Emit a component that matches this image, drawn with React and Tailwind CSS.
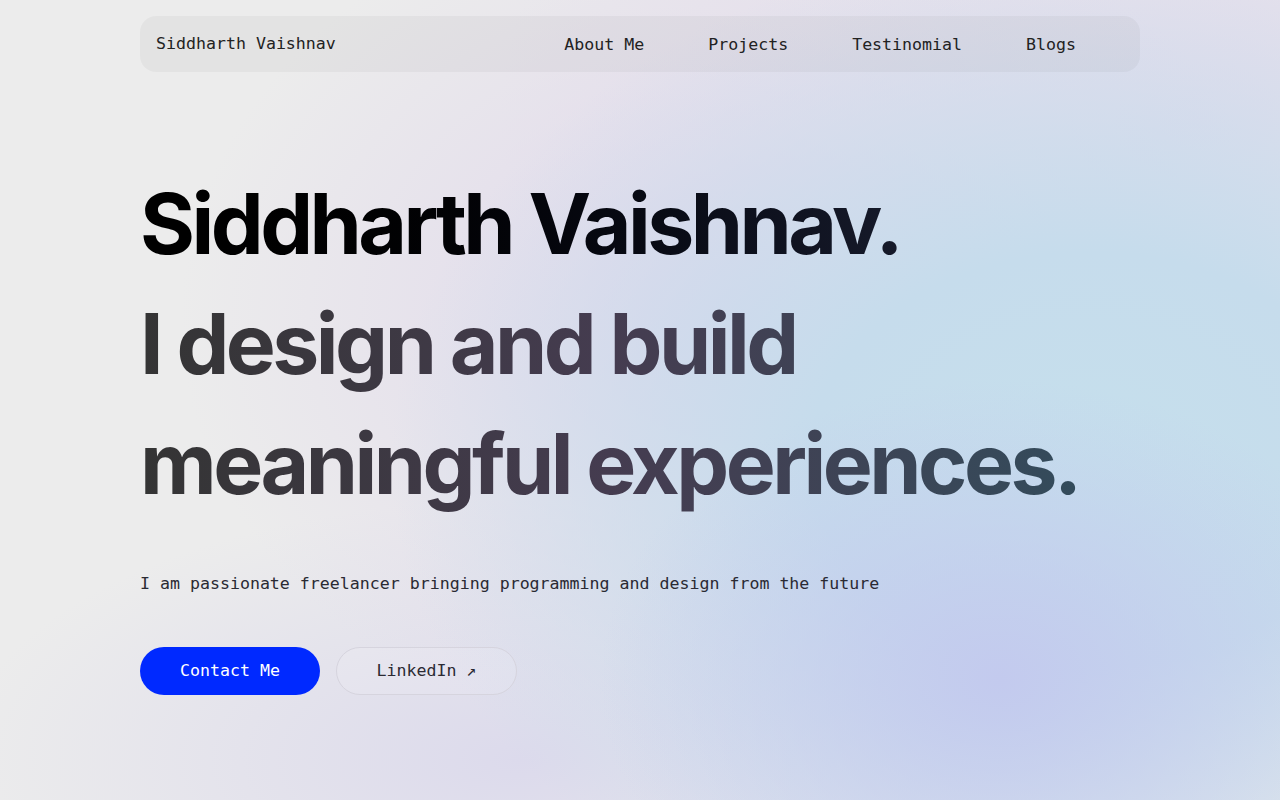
import React from "react";

const mono = { fontFamily: '"DejaVu Sans Mono", "Liberation Mono", monospace' };

export default function App() {
  return (
    <div className="min-h-[800px] w-full bg-[#ececec] bg-[radial-gradient(ellipse_400px_300px_at_1000px_680px,#c3caee_0%,rgba(195,202,238,0)_100%),radial-gradient(ellipse_700px_520px_at_1090px_460px,#c5dfec_0%,#c6dcec_40%,rgba(198,220,236,0)_100%),radial-gradient(ellipse_560px_440px_at_740px_320px,#dfd6ec_0%,rgba(223,214,236,0)_100%),radial-gradient(ellipse_560px_260px_at_520px_760px,#dcdaec_0%,rgba(220,218,236,0)_100%),radial-gradient(ellipse_700px_500px_at_1200px_120px,#e4dcec_0%,rgba(228,220,236,0)_100%)]">
      <div className="mx-auto w-[1000px] pt-4">
        <nav className="flex h-14 items-center justify-between rounded-2xl bg-black/[0.035] pl-4 pr-16" style={mono}>
          <span className="text-[16.6px] font-medium text-[#222]">Siddharth Vaishnav</span>
          <div className="flex items-center gap-16 pt-0.5 text-[16.6px] text-[#222]">
            <a>About Me</a>
            <a>Projects</a>
            <a>Testinomial</a>
            <a>Blogs</a>
          </div>
        </nav>

        <h1
          className="mt-[92px] text-[84px] font-bold leading-[120px] tracking-[-0.042em]"
          style={{ fontFamily: 'Inter, "Noto Sans", sans-serif' }}
        >
          <span className="block w-fit bg-gradient-to-r from-black to-[#161a2a] bg-clip-text text-transparent">
            Siddharth Vaishnav.
          </span>
          <span className="block w-fit whitespace-nowrap bg-gradient-to-r from-[#343434] via-[#453c50] to-[#334b5b] bg-clip-text text-transparent">
            I design and build
            <br />
            meaningful experiences.
          </span>
        </h1>

        <p className="mt-12 text-[16.6px] leading-6 text-[#2a2a33]" style={mono}>
          I am passionate freelancer bringing programming and design from the future
        </p>

        <div className="mt-[51px] flex gap-4" style={mono}>
          <button className="h-12 w-[180px] rounded-full bg-[#0029ff] text-[16.6px] text-white">
            Contact Me
          </button>
          <button className="h-12 w-[181px] rounded-full border border-[#d6d4de] bg-white/10 text-[16.6px] text-[#2a2a33]">
            LinkedIn ↗
          </button>
        </div>
      </div>
    </div>
  );
}
